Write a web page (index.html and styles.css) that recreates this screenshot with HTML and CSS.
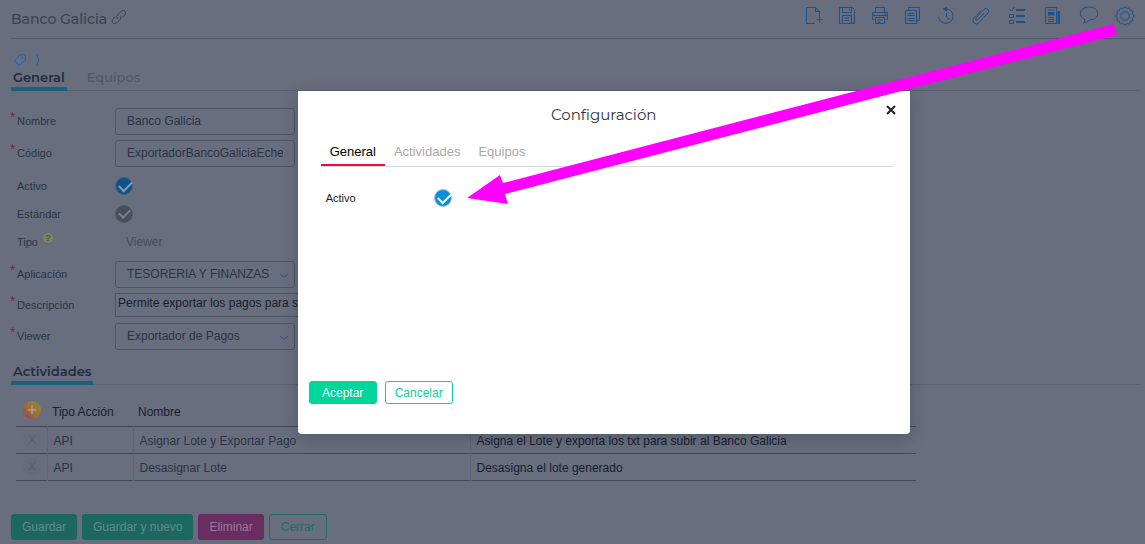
FILE: index.html
```html
<!DOCTYPE html>
<html lang="es">
<head>
<meta charset="utf-8">
<title>Banco Galicia</title>
<link rel="stylesheet" href="styles.css">
</head>
<body>
<main class="page">
  <header class="topbar">
    <h1 class="title">Banco Galicia</h1>
    <svg class="link-icon" viewBox="0 0 16 16"><path d="M6.500 9.500a2.600 2.600 0 0 1 0-3.600l3.800-3.800a2.500 2.500 0 0 1 3.600 3.600l-2.600 2.600M9.300 6.500a2.600 2.600 0 0 1 0 3.600l-3.800 3.800a2.500 2.500 0 0 1-3.600-3.600l2.600-2.600"/></svg>
    <nav class="tools" aria-label="Herramientas">
      <button class="tool" aria-label="Nuevo"><svg viewBox="0 0 20 20"><path d="M11 17.500H2.500v-16h9l4 4v5M11.500 1.500v4h4M15.500 10.500v6M12.500 13.500h6"/></svg></button>
      <button class="tool" aria-label="Guardar"><svg viewBox="0 0 20 20"><path d="M2.500 1.500h13l2 2v14h-15zM5.500 1.500v5h9v-5M12.500 2.500v2M5.500 17.500v-8h9v8M7.500 12h5M7.500 14.500h5"/></svg></button>
      <button class="tool" aria-label="Imprimir"><svg viewBox="0 0 20 20"><path d="M5.500 6.500v-5h9v5M4.500 13.500h-2v-7h15v7h-2M5.500 11.500h9v6h-9zM2.500 9.500h15M7.500 14h5M7.500 16h3M14 8h2"/></svg></button>
      <button class="tool" aria-label="Copiar"><svg viewBox="0 0 20 20"><path d="M2.500 4.500h11v13h-11zM5.500 4v-2.500h11v13h-2.500M4.500 7.500h7M4.500 9.500h7M4.500 12.500h7M4.500 14.500h7"/></svg></button>
      <button class="tool" aria-label="Historial"><svg viewBox="0 0 20 20"><path d="M8 3a7.300 7.300 0 1 1-5.500 7.500M10.500 7v4l3 2.500"/><path class="solid" d="M11 .500v5L6.500 3z"/></svg></button>
      <button class="tool" aria-label="Adjuntar"><svg viewBox="0 0 20 20"><path d="M13 7l-6 6.500a1.200 1.200 0 0 1-2-1.500l8-8.500a2.600 2.600 0 0 1 4 3.500l-9 9.500a3.400 3.400 0 0 1-5.500-4l7.500-8"/></svg></button>
      <button class="tool tool-wide" aria-label="Tareas"><svg viewBox="0 0 20 20"><path d="M2.500 3l2 2 3-4M2.500 8.500h4v3h-4zM2.500 14.500h4v3h-4z"/><path class="heavy" d="M9 4h9M9 10h9M9 16h9"/></svg></button>
      <button class="tool" aria-label="Noticias"><svg viewBox="0 0 20 20"><path d="M2.500 1.500h11v16h-11zM5 4h6.500M5 11.500h6M5 13.500h6M5 15.500h6"/><path class="solid" d="M5 6h6.500v3.500H5zM14.500 5h2.500v13h-2.500z"/></svg></button>
      <button class="tool tool-wide" aria-label="Comentarios"><svg viewBox="0 0 20 20"><path d="M4 17c2-1 2-2.500 1.500-4C2.500 11.800 1.300 9.800 1.300 7.500c0-4 4-6.500 8.700-6.500s8.700 2.500 8.700 6.500-4 6.500-8.200 6.500C8.500 15.800 6 17 4 17z"/></svg></button>
      <button class="tool" aria-label="Configuración"><svg viewBox="0 0 20 20"><path d="M10 .800L12.200 2.500L14.600 2L15.600 4.400L18 5.400L17.500 7.900L19.200 10L17.500 12.200L18 14.600L15.600 15.600L14.600 18L12.200 17.500L10 19.200L7.800 17.500L5.400 18L4.400 15.600L2 14.600L2.500 12.200L.800 10L2.500 7.900L2 5.400L4.400 4.400L5.400 2L7.800 2.500z"/><circle cx="10" cy="10" r="4.200"/></svg></button>
    </nav>
  </header>

  <div class="crumbs">
    <svg class="tag" viewBox="0 0 14 14"><path d="M1.500 7.500L7 2l5-.500.500 5L6.500 12.500z"/><circle cx="9.500" cy="4.500" r=".5"/></svg>
    <svg class="angle" viewBox="0 0 6 14"><path d="M1 1q5 6 0 12"/></svg>
  </div>
  <nav class="tabs">
    <a class="tab active" href="#general">General</a>
    <a class="tab" href="#equipos">Equipos</a>
  </nav>

  <form class="form" id="general">
    <div class="row"><label class="label required" for="nombre">Nombre</label><input class="field" id="nombre" type="text" value="Banco Galicia"></div>
    <div class="row"><label class="label required" for="codigo">Código</label><input class="field" id="codigo" type="text" value="ExportadorBancoGaliciaEcheq"></div>
    <div class="checks">
      <div class="row short"><label class="label" for="activo">Activo</label><input class="check dim" id="activo" type="checkbox" checked></div>
      <div class="row short"><label class="label" for="estandar">Estándar</label><input class="check gray" id="estandar" type="checkbox" checked disabled></div>
      <div class="row short"><span class="label with-help">Tipo <span class="help">?</span></span><span class="readonly">Viewer</span></div>
    </div>
    <div class="row"><label class="label required" for="aplicacion">Aplicación</label><span class="select"><select class="field" id="aplicacion"><option>TESORERIA Y FINANZAS</option></select><svg viewBox="0 0 10 6"><path d="M1 1l4 3.500L9 1"/></svg></span></div>
    <div class="row text-row"><label class="label required" for="descripcion">Descripción</label><textarea class="area" id="descripcion" rows="1">Permite exportar los pagos para subir</textarea></div>
    <div class="row"><label class="label required" for="viewer">Viewer</label><span class="select"><select class="field" id="viewer"><option>Exportador de Pagos</option></select><svg viewBox="0 0 10 6"><path d="M1 1l4 3.500L9 1"/></svg></span></div>
  </form>

  <div class="tabs section"><h2 class="tab active">Actividades</h2></div>
  <table class="grid">
    <thead>
      <tr><th class="c-act"><button class="add" aria-label="Agregar"><svg viewBox="0 0 18 18"><path d="M9 4.500v9M4.500 9h9"/></svg></button></th><th class="c-type">Tipo Acción</th><th class="c-name">Nombre</th><th></th></tr>
    </thead>
    <tbody>
      <tr><td><button class="remove" aria-label="Quitar">X</button></td><td>API</td><td>Asignar Lote y Exportar Pago</td><td class="dark">Asigna el Lote y exporta los txt para subir al Banco Galicia</td></tr>
      <tr><td><button class="remove" aria-label="Quitar">X</button></td><td>API</td><td>Desasignar Lote</td><td class="dark">Desasigna el lote generado</td></tr>
    </tbody>
  </table>

  <footer class="actions">
    <button class="btn green">Guardar</button>
    <button class="btn green">Guardar y nuevo</button>
    <button class="btn pink">Eliminar</button>
    <button class="btn outline">Cerrar</button>
  </footer>
</main>

<section class="dialog" role="dialog" aria-labelledby="dialog-title">
  <header class="dialog-head">
    <h2 class="dialog-title" id="dialog-title">Configuración</h2>
    <button class="close" aria-label="Cerrar"><svg viewBox="0 0 10 10"><path d="M1 1l8 8M9 1l-8 8"/></svg></button>
  </header>
  <nav class="dialog-tabs">
    <a class="dialog-tab active" href="#d-general">General</a>
    <a class="dialog-tab" href="#d-actividades">Actividades</a>
    <a class="dialog-tab" href="#d-equipos">Equipos</a>
  </nav>
  <div class="dialog-row"><label class="dialog-label" for="d-activo">Activo</label><input class="check" id="d-activo" type="checkbox" checked></div>
  <footer class="dialog-actions">
    <button class="dbtn primary">Aceptar</button>
    <button class="dbtn">Cancelar</button>
  </footer>
</section>

<svg class="arrow" width="650" height="182" viewBox="0 0 650 182"><path d="M647 1L650 12L38 171L41 181L0 175L33 152L36 160z"/></svg>
</body>
</html>
```
FILE: styles.css
```css
* { box-sizing: border-box; }
html { height: 100%; }
body {
  margin: 0;
  min-height: 100%;
  background: #686e7d;
  color: #2c3347;
  font: 12px/16px "Liberation Sans", Arial, sans-serif;
  overflow: hidden;
}
h1, h2 { margin: 0; font-weight: 500; }
button, input, select, textarea { font: inherit; color: inherit; margin: 0; }
button { padding: 0; border: 0; background: none; cursor: pointer; }
a { color: inherit; text-decoration: none; }
svg { display: block; fill: none; stroke: currentColor; }

.page { padding-left: 11px; }
.topbar {
  display: flex;
  align-items: center;
  height: 39px;
  border-bottom: 1px solid #535a6a;
}
.title {
  font: 500 14px/20px Montserrat, Inter, sans-serif;
  color: #3b4254;
}
.link-icon { width: 16px; height: 16px; margin: 0 auto 4px 4px; color: #3b4254; }
.tools {
  display: flex;
  align-items: center;
  gap: 13px;
  padding: 0 10px 7px 0;
  color: #1b5289;
}
.tool svg { width: 20px; height: 20px; }
.tool-wide { padding: 0 1px; }
.tools .tool:nth-last-child(-n+5) { margin-left: 2px; }
.solid { fill: currentColor; stroke: none; }
.heavy { stroke-width: 2; }

.crumbs {
  display: flex;
  align-items: center;
  gap: 8px;
  height: 28px;
  padding: 13px 0 0 2px;
  color: #2060a4;
}
.tag { width: 14px; height: 14px; }
.angle { width: 6px; height: 14px; }

.tabs {
  display: flex;
  gap: 18px;
  height: 24px;
  margin-right: 5px;
  border-bottom: 1px solid #5a6070;
  font: 500 13px/20px Montserrat, Inter, sans-serif;
  color: #515767;
}
.tab { font: inherit; height: 24px; padding: 0 2px; }
.tab.active {
  border-bottom: 4px solid #1c6079;
  color: #242b42;
  font-weight: 600;
}

.form { padding-top: 14px; width: 360px; }
.checks { padding: 3px 0 2px; }
.row { display: flex; align-items: center; height: 32px; }
.row.short { height: 28px; }
.row.text-row { height: 30px; }
.label {
  position: relative;
  flex: 0 0 104px;
  padding-left: 6px;
  font-size: 11px;
}
.label.required::before {
  content: "*";
  position: absolute;
  left: -1px;
  top: -4px;
  font-size: 14px;
  color: #7e2343;
}
.with-help { display: flex; align-items: center; gap: 5px; }
.help {
  width: 10px;
  height: 10px;
  margin-bottom: 8px;
  border-radius: 50%;
  background: #7d8366;
  color: #4c5c30;
  font-size: 9px;
  font-weight: bold;
  line-height: 10px;
  text-align: center;
}
.readonly { padding-left: 11px; color: #444b5c; }
.field {
  width: 180px;
  height: 27px;
  padding: 0 11px;
  border: 1px solid #4e5566;
  border-radius: 3px;
  background: transparent;
  appearance: none;
}
.select { position: relative; }
.select svg {
  position: absolute;
  right: 6px;
  top: 12px;
  width: 10px;
  height: 6px;
  color: #24589a;
  pointer-events: none;
}
.area {
  flex: 1;
  height: 24px;
  padding: 1px 2px;
  border: 1px solid #4e5566;
  background: transparent;
  color: #191e2e;
  resize: none;
  overflow: hidden;
}
.check {
  appearance: none;
  position: relative;
  width: 18px;
  height: 18px;
  border: 1px solid #b3bfc8;
  border-radius: 50%;
  background: #0590de;
  color: #fff;
}
.check::after {
  content: "";
  position: absolute;
  left: 3px;
  top: 3px;
  width: 11px;
  height: 6px;
  border: solid currentColor;
  border-width: 0 0 2px 2px;
  transform: rotate(-45deg);
}
.check.dim { border-color: #4c5f78; background: #0b538c; color: #8d97a8; }
.check.gray { border-color: #505767; background: #494e5c; color: #7b8190; }
.check.gray::after { width: 9px; height: 5px; }

.section { margin-top: 9px; }
.grid {
  width: 900px;
  margin: 13px 0 0 5px;
  border-collapse: collapse;
  table-layout: fixed;
  text-align: left;
}
.grid th {
  height: 28px;
  padding: 0 5px;
  font-weight: normal;
  color: #171d2e;
}
.grid td {
  height: 27px;
  padding: 3px 6px 0;
  border-right: 1px solid #5f6575;
}
.grid td:last-child { border-right: 0; }
.grid tr { border-bottom: 1px solid #424959; }
.grid .dark { color: #171d2e; }
.c-act { width: 31px; }
.c-type { width: 86px; }
.c-name { width: 337px; }
.add {
  display: block;
  width: 18px;
  height: 18px;
  margin-left: 2px;
  margin-bottom: 4px;
  border-radius: 50%;
  background: linear-gradient(45deg, #8d3c62, #a06c35 45%, #8f8c38);
  color: #b0b4bb;
}
.grid td:first-child { padding: 0 7px; }
.remove {
  display: block;
  width: 18px;
  height: 18px;
  border-radius: 50%;
  background: #656b7a;
  color: #596070;
  line-height: 18px;
}

.actions { display: flex; gap: 5px; margin-top: 33px; }
.btn {
  height: 26px;
  padding: 0 11px;
  border-radius: 3px;
}
.green { background: #1c675f; color: #648a91; }
.pink { background: #6a2d61; color: #917b98; }
.outline { border: 1px solid #1c6f67; color: #1c6f67; }

.dialog {
  position: absolute;
  left: 26%;
  top: 91px;
  width: 612px;
  border-radius: 0 0 4px 4px;
  background: #fff;
  box-shadow: 0 4px 16px rgba(20, 26, 44, .25);
  padding: 0 11px 30px;
}
.dialog-head { position: relative; padding-top: 14px; }
.dialog-title {
  font: 400 15px/20px Montserrat, Inter, sans-serif;
  color: #2c3347;
  text-align: center;
}
.close { position: absolute; right: 3px; top: 14px; color: #222; }
.close svg { width: 10px; height: 10px; stroke-width: 2; }
.dialog-tabs {
  display: flex;
  margin: 16px 5px 0 12px;
  height: 26px;
  border-bottom: 1px solid #d9dadd;
  font-size: 13px;
  line-height: 21px;
  color: #a9a9a9;
}
.dialog-tab { height: 25px; padding: 0 9px; }
.dialog-tab.active { border-bottom: 2px solid #f3083b; color: #000; }
.dialog-row {
  display: flex;
  align-items: center;
  margin-top: 22px;
  padding-left: 17px;
}
.dialog-label { flex: 0 0 108px; font-size: 11px; color: #141c2e; }
.dialog-actions { display: flex; gap: 8px; margin-top: 174px; }
.dbtn {
  width: 68px;
  height: 23px;
  border: 1px solid #00d69a;
  border-radius: 3px;
  color: #00d69a;
}
.dbtn.primary { background: #00d69a; color: #fff; }
.arrow {
  position: absolute;
  left: 467px;
  top: 23px;
  fill: #f0f;
  stroke: none;
  pointer-events: none;
}
```
